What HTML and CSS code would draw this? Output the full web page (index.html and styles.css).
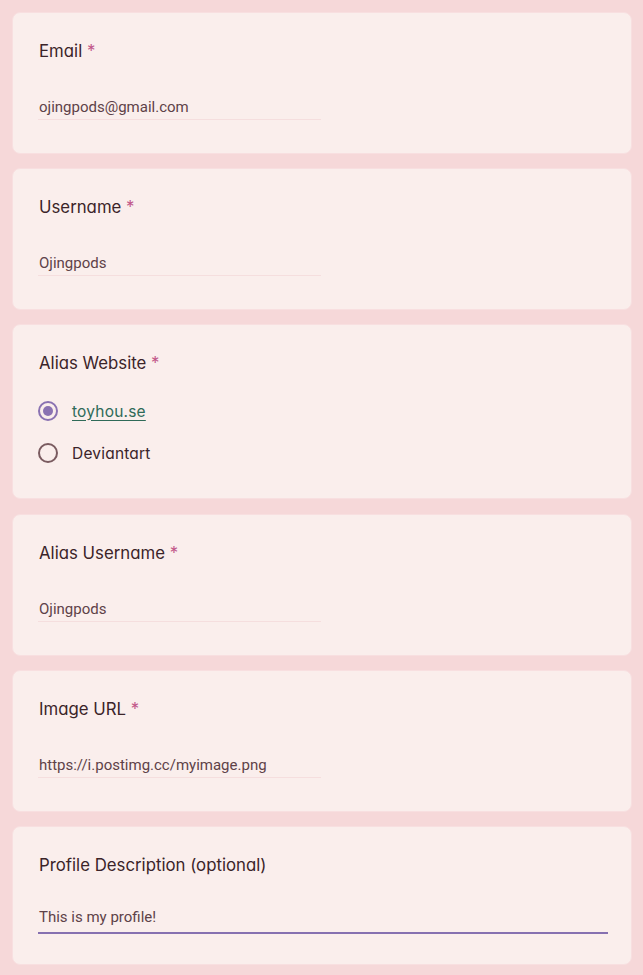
FILE: index.html
```html
<!DOCTYPE html>
<html lang="en">
<head>
<meta charset="utf-8">
<title>Form</title>
<link rel="stylesheet" href="styles.css">
</head>
<body>
<main class="form">
  <section class="card">
    <div class="label">Email <span class="req">*</span></div>
    <div class="field">ojingpods@gmail.com</div>
  </section>
  <section class="card">
    <div class="label">Username <span class="req">*</span></div>
    <div class="field">Ojingpods</div>
  </section>
  <section class="card card-radio">
    <div class="label">Alias Website <span class="req">*</span></div>
    <div class="options">
      <div class="option">
        <span class="radio checked"></span>
        <a class="opt-text link" href="#">toyhou.se</a>
      </div>
      <div class="option">
        <span class="radio"></span>
        <span class="opt-text">Deviantart</span>
      </div>
    </div>
  </section>
  <section class="card">
    <div class="label">Alias Username <span class="req">*</span></div>
    <div class="field">Ojingpods</div>
  </section>
  <section class="card">
    <div class="label">Image URL <span class="req">*</span></div>
    <div class="field">https://i.postimg.cc/myimage.png</div>
  </section>
  <section class="card card-last">
    <div class="label">Profile Description (optional)</div>
    <div class="field field-active">This is my profile!</div>
  </section>
</main>
</body>
</html>
```
FILE: styles.css
```css
html, body {
  margin: 0;
  padding: 0;
  background: #f6d8d9;
}
body {
  font-family: "Inter", "Noto Sans", sans-serif;
}
.form {
  display: flex;
  flex-direction: column;
  gap: 14px;
  padding: 12px 11px 12px 12px;
}
.card {
  box-sizing: border-box;
  min-height: 142px;
  background: #faeeec;
  border: 1px solid #f8dfe0;
  border-radius: 8px;
  padding: 24px 26px 33px 26px;
}
.label {
  font-size: 16.8px;
  line-height: 24px;
  padding-top: 2px;
  margin-bottom: -2px;
  color: #3b2429;
  font-feature-settings: "cv11";
}
.req {
  color: #c2588a;
}
.field {
  margin-top: 36px;
  margin-left: -1px;
  padding-left: 1px;
  width: 282px;
  font-family: "Roboto", sans-serif;
  font-size: 15px;
  line-height: 20px;
  color: #5e4248;
  padding-bottom: 2px;
  border-bottom: 1px solid #f5dede;
}
.card-radio {
  padding-bottom: 24px;
}
.card-radio + .card {
  margin-top: 1px;
}
.options {
  margin-top: 17px;
  display: flex;
  flex-direction: column;
}
.option {
  height: 42px;
  display: flex;
  align-items: center;
  gap: 14px;
  margin-left: -1px;
}
.radio {
  box-sizing: border-box;
  width: 20px;
  height: 20px;
  border-radius: 50%;
  border: 2px solid #7a5b60;
  display: flex;
  align-items: center;
  justify-content: center;
}
.radio.checked {
  border-color: #8a72b2;
}
.radio.checked::after {
  content: "";
  width: 10px;
  height: 10px;
  border-radius: 50%;
  background: #8a72b2;
}
.opt-text {
  font-size: 15.5px;
  color: #3b2429;
  font-feature-settings: "cv11";
  letter-spacing: 0.2px;
}
.link {
  color: #2f6a58;
  text-decoration: underline;
  text-underline-offset: 3px;
}
.card-last {
  min-height: 138px;
  padding-bottom: 30px;
}
.field-active {
  margin-top: 32px;
  margin-right: -3px;
  width: auto;
  padding-bottom: 5px;
  border-bottom: 2px solid #8670b0;
}
```
